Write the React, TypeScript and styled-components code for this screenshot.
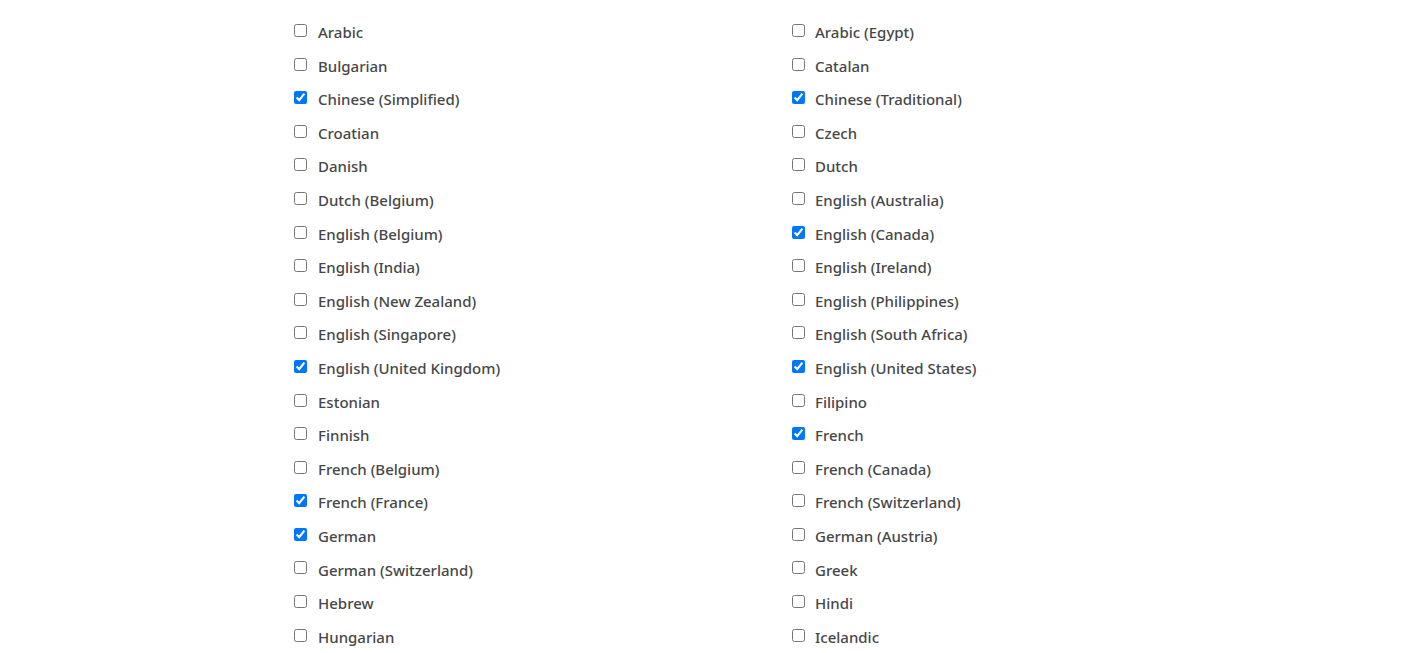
import React from "react";
import styled, { createGlobalStyle } from "styled-components";

const Global = createGlobalStyle`
  html, body { margin: 0; padding: 0; background: #fff; }
  body { font-family: "Noto Sans", "Open Sans", sans-serif; }
`;

const Grid = styled.div`
  display: grid;
  grid-template-columns: 498px 498px;
  grid-auto-rows: 33.6px;
  padding: 13.7px 0 0 290px;
`;

const Item = styled.label<{ $gap: number }>`
  display: flex;
  align-items: center;
  font-size: 15px;
  font-weight: 500;
  color: #474747;
  cursor: pointer;

  input {
    margin-right: ${(p) => p.$gap}px;
  }
`;

const Box = styled.input`
  width: 13px;
  height: 13px;
  margin: 0 11px 0 4px;
  flex: none;
`;

const Text = styled.span`
  position: relative;
  top: 1.6px;
  white-space: nowrap;
`;

const langs: [string, boolean][] = [
  ["Arabic", false], ["Arabic (Egypt)", false],
  ["Bulgarian", false], ["Catalan", false],
  ["Chinese (Simplified)", true], ["Chinese (Traditional)", true],
  ["Croatian", false], ["Czech", false],
  ["Danish", false], ["Dutch", false],
  ["Dutch (Belgium)", false], ["English (Australia)", false],
  ["English (Belgium)", false], ["English (Canada)", true],
  ["English (India)", false], ["English (Ireland)", false],
  ["English (New Zealand)", false], ["English (Philippines)", false],
  ["English (Singapore)", false], ["English (South Africa)", false],
  ["English (United Kingdom)", true], ["English (United States)", true],
  ["Estonian", false], ["Filipino", false],
  ["Finnish", false], ["French", true],
  ["French (Belgium)", false], ["French (Canada)", false],
  ["French (France)", true], ["French (Switzerland)", false],
  ["German", true], ["German (Austria)", false],
  ["German (Switzerland)", false], ["Greek", false],
  ["Hebrew", false], ["Hindi", false],
  ["Hungarian", false], ["Icelandic", false],
];

export default function App() {
  return (
    <>
      <Global />
      <Grid>
        {langs.map(([name, checked], i) => (
          <Item key={name} $gap={i % 2 === 0 ? 11 : 10}>
            <Box type="checkbox" defaultChecked={checked} />
            <Text>{name}</Text>
          </Item>
        ))}
      </Grid>
    </>
  );
}
